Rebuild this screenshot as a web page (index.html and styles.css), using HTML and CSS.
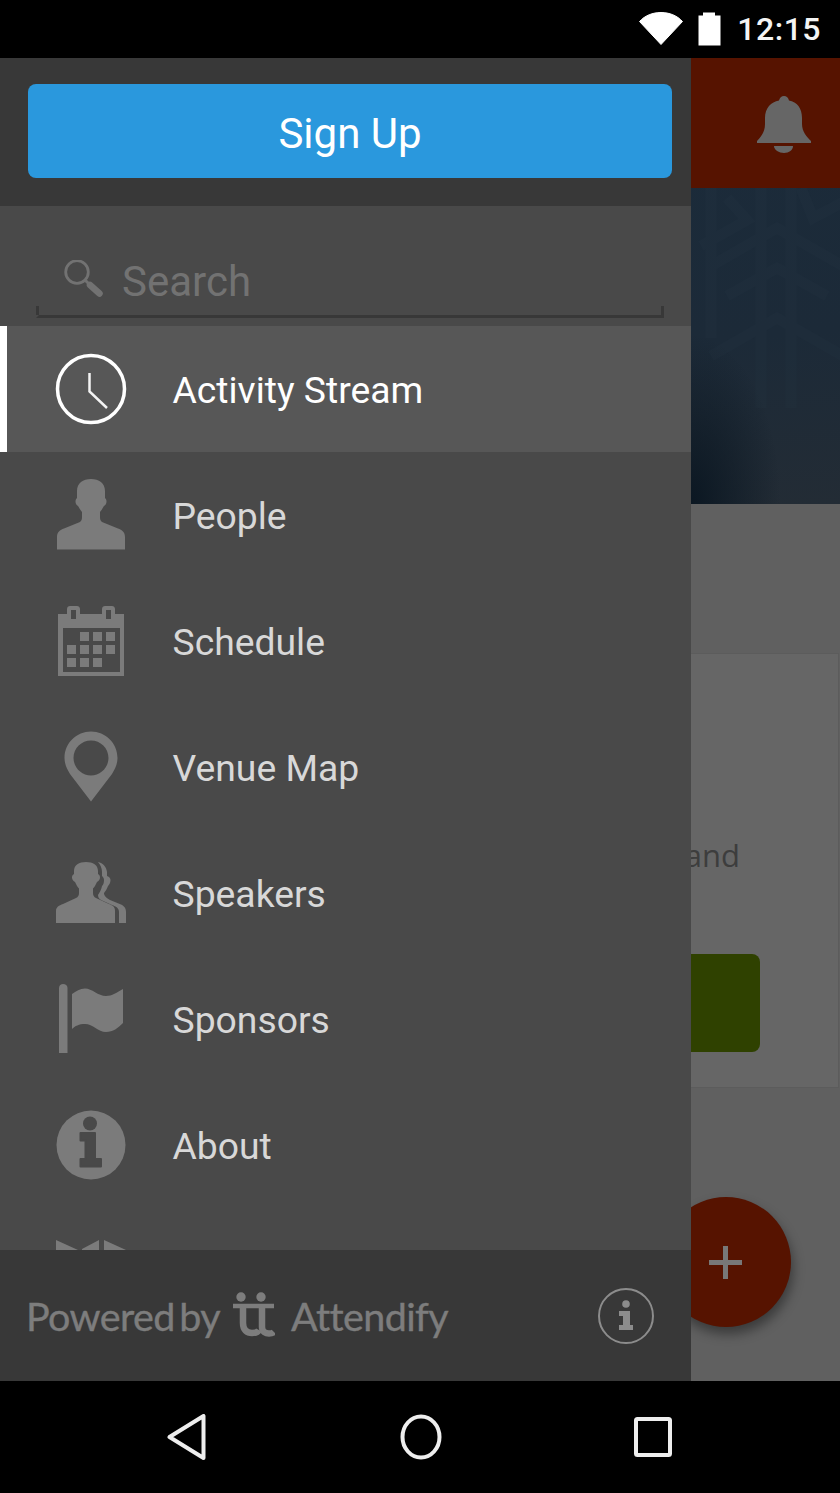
FILE: index.html
```html
<!DOCTYPE html>
<html lang="en">
<head>
    <meta charset="UTF-8">
    <meta name="viewport" content="width=device-width, initial-scale=1.0">
    <title>Attendify</title>
    <link rel="stylesheet" href="styles.css">
</head>
<body>
    <div class="status-bar">
        <svg class="status-wifi" width="46" height="34" viewBox="0 0 46 34">
            <path d="M1.500 10.500C7 4.500 14.500 1.500 23 1.500C31.500 1.500 39 4.500 44.500 10.500L23 33.500Z" fill="#fff" stroke="#fff" stroke-linejoin="round"/>
        </svg>
        <svg class="status-battery" width="24" height="34" viewBox="0 0 24 34">
            <path d="M0.500 33.500V3.500H5V0.500H17V3.500H22.500V33.500Z" fill="#fff"/>
        </svg>
        <span class="status-time">12:15</span>
    </div>

    <div class="app">
        <!-- page behind the drawer -->
        <div class="page">
            <div class="page-bar">
                <svg class="bell" width="54" height="57" viewBox="0 0 54 57">
                    <path d="M0 47V45C4 41 8 36 8 28V22C8 12 14 6 22 4.500C22.500 2 24.500 0 27 0C29.500 0 31.500 2 32 4.500C40 6 45 12 45 22V28C45 36 50 41 54 45V47Z" fill="#666"/>
                    <path d="M17 50H36C36 54 32 57 27 57C22 57 17 54 17 50Z" fill="#666"/>
                </svg>
            </div>
            <div class="page-hero">
                <svg class="hero-pattern" width="149" height="316" viewBox="0 0 149 316">
                    <g fill="none" stroke="#2c3c4b" stroke-width="11" opacity="0.12">
                        <path d="M20 78L86 40L152 78"/>
                        <path d="M20 168L86 130L152 168"/>
                        <path d="M36 108L86 80L136 108"/>
                        <path d="M70 0V220"/>
                        <path d="M100 0V220"/>
                        <path d="M20 0V150"/>
                        <path d="M36 10L56 32L10 58"/>
                        <path d="M110 0L122 30L160 10"/>
                    </g>
                </svg>
            </div>
            <div class="page-gap"></div>
            <div class="page-card">
                <p class="card-text">and</p>
                <div class="card-button"></div>
            </div>
            <div class="fab"><span class="fab-plus"></span></div>
        </div>

        <!-- drawer -->
        <aside class="drawer">
            <div class="drawer-head">
                <button class="signup">Sign Up</button>
            </div>
            <div class="drawer-body">
                <div class="search">
                    <svg width="40" height="40" viewBox="0 0 40 40">
                        <circle cx="13" cy="12" r="11.300" fill="none" stroke="#727272" stroke-width="2.800"/>
                        <path d="M21 20L26 25" stroke="#727272" stroke-width="3"/>
                        <path d="M26 25L35.500 33.500" stroke="#727272" stroke-width="6.500" stroke-linecap="round"/>
                    </svg>
                    <span class="search-text">Search</span>
                </div>
                <ul class="menu">
                    <li class="menu-item active">
                        <span class="menu-icon">
                            <svg width="72" height="72" viewBox="0 0 72 72">
                                <circle cx="36" cy="36" r="33.500" fill="none" stroke="#fff" stroke-width="3.500"/>
                                <path d="M34.500 20V38.500L52 55" fill="none" stroke="#f4f4f4" stroke-width="2.500"/>
                            </svg>
                        </span>
                        <span class="menu-label">Activity Stream</span>
                    </li>
                    <li class="menu-item">
                        <span class="menu-icon">
                            <svg width="72" height="72" viewBox="0 0 72 72">
                                <path d="M2 70.500V58C2 53 5 51 9 49.500L25 43C26.500 42 27 40 27 38V33C25 31 24 28 23 27C21.500 26.500 20.500 24.500 20.500 22.500C20.500 21 21 20 22 19V12C22 4 28 0 36 0C44 0 50 4 50 12V19C51 20 51.500 21 51.500 22.500C51.500 24.500 50.500 26.500 49 27C48 28 47 31 45 33V38C45 40 45.500 42 47 43L63 49.500C67 51 70 53 70 58V70.500Z" fill="#7b7b7b"/>
                            </svg>
                        </span>
                        <span class="menu-label">People</span>
                    </li>
                    <li class="menu-item">
                        <span class="menu-icon">
                            <svg width="72" height="72" viewBox="0 0 72 72">
                                <path fill-rule="evenodd" fill="#7b7b7b" d="M3 9H12V4C12 2 13.500 1 15 1H22C23.500 1 25 2 25 4V9H47V4C47 2 48.500 1 50 1H57C58.500 1 60 2 60 4V9H69V71H3ZM8 23V67H65V23ZM16 5V14H21V5ZM51 5V14H56V5Z"/>
                                <g fill="#7b7b7b">
                                    <rect x="25" y="27" width="9" height="9"/><rect x="38" y="27" width="9" height="9"/><rect x="51" y="27" width="9" height="9"/>
                                    <rect x="12" y="40" width="9" height="9"/><rect x="25" y="40" width="9" height="9"/><rect x="38" y="40" width="9" height="9"/><rect x="51" y="40" width="9" height="9"/>
                                    <rect x="12" y="53" width="9" height="9"/><rect x="25" y="53" width="9" height="9"/><rect x="38" y="53" width="9" height="9"/>
                                </g>
                            </svg>
                        </span>
                        <span class="menu-label">Schedule</span>
                    </li>
                    <li class="menu-item">
                        <span class="menu-icon">
                            <svg width="72" height="72" viewBox="0 0 72 72">
                                <path fill-rule="evenodd" fill="#7b7b7b" d="M36 0.500C50.500 0.500 62.500 12 62.500 27C62.500 33 60 38 57 43L36 70.500L15 43C12 38 9.500 33 9.500 27C9.500 12 21.500 0.500 36 0.500ZM36 9.500C26.500 9.500 18.500 17 18.500 27C18.500 36.500 26.500 44.500 36 44.500C45.500 44.500 53.500 36.500 53.500 27C53.500 17 45.500 9.500 36 9.500Z"/>
                            </svg>
                        </span>
                        <span class="menu-label">Venue Map</span>
                    </li>
                    <li class="menu-item">
                        <span class="menu-icon">
                            <svg width="72" height="72" viewBox="0 0 72 72">
                                <path d="M1 66V54C1 50 4 48.500 8 47L21 41C23 40 24 38.500 24 36V31.500C22 29.500 21 27 20 25C18.500 24.500 17 22.500 17 20.500C17 19 17.500 18 19 17V14C19 8 24 5 31 5C38 5 43 8 43 14V17C44.500 18 45 19 45 20.500C45 22.500 43.500 24.500 42 25C41 27 40 29.500 38 31.500V36C38 38.500 39 40 41 41L54 47C58 48.500 60 50 60 54V66Z" fill="#7b7b7b"/>
                                <path d="M43 5C48 6 51.500 10 52 15V19C54.500 20 55.500 21.500 55.500 23C55.500 26 54 28 53 29C52 32 50.500 34 49 36V37C50 40 52 41.500 55 43L66 47.500C69 49 71 51 71 55V66H64V55C64 51 61 49.500 57 48L46 43C44 42 43 40 43 38C45 35 46.500 32 47 29C48.500 28 49 25 49 23C49 21 48 20 47 19V15C47 11 45.500 8 43 5Z" fill="#7b7b7b"/>
                            </svg>
                        </span>
                        <span class="menu-label">Speakers</span>
                    </li>
                    <li class="menu-item">
                        <span class="menu-icon">
                            <svg width="72" height="72" viewBox="0 0 72 72">
                                <path d="M4 5C4 2.500 6 1 8 1C10.500 1 12.500 2.500 12.500 5V70H4Z" fill="#7b7b7b"/>
                                <path d="M17 11C21 8 25 5.500 30 5.500C37 5.500 43 13 51 13C57 13 62 9.500 68 6V40C63 45 58 49 51 49C43 49 38 41 30 41C24 41 20 43 17 46Z" fill="#7b7b7b"/>
                            </svg>
                        </span>
                        <span class="menu-label">Sponsors</span>
                    </li>
                    <li class="menu-item">
                        <span class="menu-icon">
                            <svg width="72" height="72" viewBox="0 0 72 72">
                                <circle cx="36" cy="36" r="34.500" fill="#7b7b7b"/>
                                <circle cx="35" cy="14.500" r="7" fill="#494949"/>
                                <path d="M25.500 24H40V50H46V57.500H25.500V50H30.500V31.500H25.500Z" fill="#494949" stroke="#494949" stroke-linejoin="round" stroke-width="2"/>
                            </svg>
                        </span>
                        <span class="menu-label">About</span>
                    </li>
                    <li class="menu-item">
                        <span class="menu-icon">
                            <svg width="72" height="72" viewBox="0 0 72 72">
                                <path d="M1 5L23 15V72H1ZM27 14L44 5V72H27ZM49 5L71 15V72H49Z" fill="#7b7b7b"/>
                            </svg>
                        </span>
                    </li>
                </ul>
            </div>
            <div class="drawer-foot">
                <div class="powered">
                    <span class="powered-text">Powered by</span>
                    <svg class="tt-logo" width="42" height="46" viewBox="0 0 42 46">
                        <g fill="#7d7d7d">
                            <circle cx="8" cy="5" r="4.700"/>
                            <circle cx="28" cy="5" r="4.700"/>
                        </g>
                        <g fill="none" stroke="#7d7d7d">
                            <path d="M0 14H41" stroke-width="4.500"/>
                            <path d="M10 14V31C10 38 14 41 19 41C23 41 25 40 26 38" stroke-width="6.500"/>
                            <path d="M29 14V35C29 40 33 41.500 36 41.500C38 41.500 40 41 41 40" stroke-width="6.500"/>
                        </g>
                    </svg>
                    <span class="powered-text">Attendify</span>
                </div>
                <svg class="foot-info" width="56" height="56" viewBox="0 0 56 56">
                    <circle cx="28" cy="28" r="27" fill="none" stroke="#8c8c8c" stroke-width="2"/>
                    <circle cx="28" cy="16" r="3.800" fill="#8c8c8c"/>
                    <path d="M21 23H32V37H35V42H21V37H25V28H21Z" fill="#8c8c8c"/>
                </svg>
            </div>
        </aside>
    </div>

    <div class="nav-bar">
        <svg width="40" height="46" viewBox="0 0 40 46">
            <path d="M2.500 23L36.500 2V44Z" fill="none" stroke="#eee" stroke-width="4" stroke-linejoin="round"/>
        </svg>
        <svg width="42" height="46" viewBox="0 0 42 46">
            <ellipse cx="21" cy="23" rx="18.500" ry="20.500" fill="none" stroke="#eee" stroke-width="4"/>
        </svg>
        <svg width="38" height="40" viewBox="0 0 38 40">
            <rect x="2" y="2" width="34" height="36" rx="1.500" fill="none" stroke="#eee" stroke-width="4"/>
        </svg>
    </div>
</body>
</html>
```

FILE: styles.css
```css
* {
    box-sizing: border-box;
}

body {
    margin: 0;
    width: 840px;
    height: 1493px;
    overflow: hidden;
    background: #000;
    font-family: Roboto, "Liberation Sans", sans-serif;
    display: flex;
    flex-direction: column;
}

svg {
    display: block;
    flex-shrink: 0;
}

/* status bar */
.status-bar {
    height: 58px;
    display: flex;
    align-items: center;
    justify-content: flex-end;
    padding-right: 19px;
    color: #fff;
}

.status-wifi {
    margin-right: 14px;
    margin-top: -2px;
}

.status-battery {
    margin-right: 15px;
}

.status-time {
    font-size: 32px;
    font-weight: 500;
    letter-spacing: 0.5px;
    color: #f4f4f4;
}

/* app */
.app {
    height: 1323px;
    display: flex;
    position: relative;
    overflow: hidden;
}

.page {
    position: absolute;
    inset: 0;
    background: #606060;
    display: flex;
    flex-direction: column;
}

.page-bar {
    height: 130px;
    background: #561300;
    display: flex;
    align-items: center;
    justify-content: flex-end;
    padding: 3px 29px 0 0;
}

.page-hero {
    height: 316px;
    background:
        radial-gradient(ellipse 90px 170px at 691px 316px, #0b1722 0, rgba(11, 23, 34, 0) 100%),
        linear-gradient(175deg, #1b2b3a 0%, #1c2a38 55%, #232c35 100%);
    display: flex;
    justify-content: flex-end;
}

.page-gap {
    height: 149px;
}

.page-card {
    height: 435px;
    width: 839px;
    background: #666;
    border: 1px solid #5c5c5c;
    border-left: 0;
    display: flex;
    flex-direction: column;
    align-items: flex-end;
}

.card-text {
    margin: 183px 98px 0 0;
    height: 36px;
    font-family: "Open Sans", sans-serif;
    font-size: 31px;
    line-height: 36px;
    color: #3d3d3d;
}

.card-button {
    margin: 81px 78px 0 0;
    width: 200px;
    height: 98px;
    background: #2f4100;
    border-radius: 8px;
}

.fab {
    position: absolute;
    left: 661px;
    top: 1139px;
    width: 130px;
    height: 130px;
    border-radius: 50%;
    background: #561300;
    box-shadow: 2px 7px 12px rgba(0, 0, 0, 0.4);
}

.fab-plus {
    position: absolute;
    left: 48px;
    top: 49px;
    width: 33px;
    height: 33px;
    background:
        linear-gradient(#787878, #787878) center / 33px 5px no-repeat,
        linear-gradient(#787878, #787878) center / 5px 33px no-repeat;
}

/* drawer */
.drawer {
    position: relative;
    width: 691px;
    height: 100%;
    background: #494949;
    display: flex;
    flex-direction: column;
}

.drawer-head {
    height: 148px;
    flex-shrink: 0;
    background: #383838;
    padding: 26px 19px 0 28px;
}

.signup {
    display: block;
    width: 100%;
    height: 94px;
    padding: 4px 0 0;
    border: none;
    border-radius: 8px;
    background: #2a98dd;
    color: #fff;
    font-family: inherit;
    font-size: 42px;
}

.drawer-body {
    flex: 1;
    min-height: 0;
    overflow: hidden;
}

.search {
    height: 112px;
    margin: 0 27px 8px 36px;
    padding: 0 0 15px 25px;
    display: flex;
    align-items: flex-end;
    gap: 18px;
    border-bottom: 3px solid #383838;
    border-left: 3px solid transparent;
    position: relative;
}

.search::before,
.search::after {
    content: "";
    position: absolute;
    bottom: 0;
    width: 3px;
    height: 9px;
    background: #383838;
}

.search::before {
    left: -3px;
}

.search::after {
    right: 0;
}

.search-text {
    font-size: 42px;
    line-height: 44px;
    color: #727272;
    margin-bottom: -4px;
}

.menu {
    list-style: none;
    margin: 0;
    padding: 0;
}

.menu-item {
    height: 126px;
    padding-left: 55px;
    display: flex;
    align-items: center;
    gap: 45.500px;
}

.menu-item.active {
    background: #575757;
    border-left: 7px solid #fff;
    padding-left: 48px;
}

.menu-icon {
    width: 72px;
    height: 72px;
}

.menu-label {
    font-size: 37.300px;
    padding-top: 1px;
    color: #d8d8d8;
}

.active .menu-label {
    color: #fff;
}

.drawer-foot {
    height: 131px;
    flex-shrink: 0;
    background: #383838;
    display: flex;
    align-items: center;
    justify-content: space-between;
    padding: 0 37px 0 26px;
}

.powered {
    display: flex;
    align-items: center;
    gap: 13px;
}

.powered-text {
    font-family: Lato, sans-serif;
    font-size: 39.500px;
    letter-spacing: -0.6px;
    word-spacing: -5px;
    color: #7d7d7d;
    -webkit-text-stroke: 0.4px #7d7d7d;
}

.tt-logo {
    margin-top: -2px;
    margin-right: 3px;
}

/* nav bar */
.nav-bar {
    height: 112px;
    display: flex;
    align-items: center;
    justify-content: space-between;
    padding: 0 168px 0 167px;
}
```
